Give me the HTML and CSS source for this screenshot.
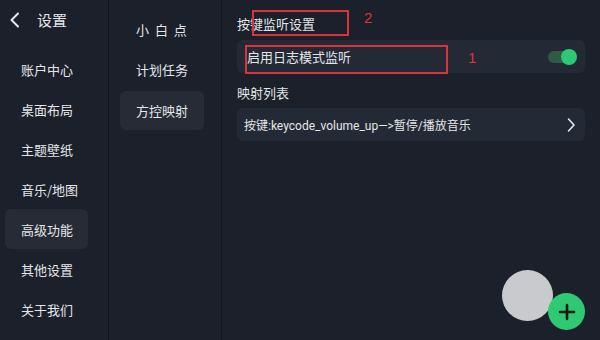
FILE: index.html
```html
<!DOCTYPE html>
<html lang="zh">
<head>
<meta charset="utf-8">
<link rel="stylesheet" href="styles.css">
</head>
<body>
<div class="app">
  <nav class="side1">
    <div class="head">
      <svg class="back" width="12" height="16" viewBox="0 0 12 16"><path d="M9 1.5 L2.5 8 L9 14.5" fill="none" stroke="#e6e7ea" stroke-width="2" stroke-linecap="round" stroke-linejoin="round"/></svg>
      <span class="title">设置</span>
    </div>
    <div class="item">账户中心</div>
    <div class="item">桌面布局</div>
    <div class="item">主题壁纸</div>
    <div class="item">音乐/地图</div>
    <div class="item active">高级功能</div>
    <div class="item">其他设置</div>
    <div class="item">关于我们</div>
  </nav>
  <nav class="side2">
    <div class="item spaced">小 白 点</div>
    <div class="item">计划任务</div>
    <div class="item active">方控映射</div>
  </nav>
  <main class="content">
    <div class="label first">按键监听设置</div>
    <div class="card">
      <span>启用日志模式监听</span>
      <span class="toggle"><span class="knob"></span></span>
    </div>
    <div class="label">映射列表</div>
    <div class="card small">
      <span>按键:keycode_volume_up—&gt;暂停/播放音乐</span>
      <svg width="10" height="16" viewBox="0 0 10 16"><path d="M2.5 2 L8 8 L2.5 14" fill="none" stroke="#e6e7ea" stroke-width="1.6" stroke-linecap="round" stroke-linejoin="round"/></svg>
    </div>
    <div class="mark mark2"></div>
    <div class="num num2">2</div>
    <div class="mark mark1"></div>
    <div class="num num1">1</div>
    <div class="fab-gray"></div>
    <div class="fab-green">
      <svg width="18" height="18" viewBox="0 0 18 18"><path d="M9 2 V16 M2 9 H16" stroke="#0f1a14" stroke-width="2.6" stroke-linecap="round"/></svg>
    </div>
  </main>
</div>
</body>
</html>
```
FILE: styles.css
```css
* { box-sizing: border-box; }
html, body {
  margin: 0;
  padding: 0;
  background: #1b202b;
  font-family: "Noto Sans CJK SC", "Noto Sans", sans-serif;
  color: #e4e5e8;
}
.app {
  display: flex;
  width: 600px;
  height: 340px;
  overflow: hidden;
}
.side1 {
  width: 109px;
  border-right: 1px solid #11151c;
  display: flex;
  flex-direction: column;
}
.head {
  height: 49px;
  display: flex;
  align-items: center;
  padding-left: 9px;
  padding-bottom: 9px;
}
.back { margin-right: 16px; }
.title { font-size: 15px; line-height: 20px; }
.item {
  height: 40px;
  display: flex;
  align-items: center;
  font-size: 13px;
  border-radius: 6px;
}
.side1 .item {
  margin-left: 5px;
  width: 83px;
  padding-left: 16px;
}
.active { background: #262b36; }
.side2 {
  width: 113px;
  border-right: 1px solid #11151c;
  display: flex;
  flex-direction: column;
  padding-top: 9px;
}
.side2 .item {
  margin-left: 11px;
  width: 84px;
  padding-left: 16px;
}
.side2 .item.active { height: 39px; margin-top: 2px; }
.spaced { word-spacing: 3px; }
.content {
  flex: 1;
  position: relative;
  padding: 0 15px 0 15px;
}
.label {
  font-size: 13px;
  height: 36px;
  display: flex;
  align-items: center;
  padding-top: 2px;
}
.label.first { height: 40px; padding-top: 6px; }
.card {
  height: 33px;
  background: #242a35;
  border-radius: 6px;
  display: flex;
  align-items: center;
  justify-content: space-between;
  padding: 0 9px 0 10px;
  font-size: 13px;
}
.card.small {
  font-family: Roboto, "Noto Sans CJK SC", sans-serif;
  font-size: 12px;
  padding-left: 7px;
  margin-top: -1px;
}
.toggle {
  position: relative;
  width: 28px;
  height: 12px;
  border-radius: 6px;
  background: #2f5b46;
}
.knob {
  position: absolute;
  right: -1px;
  top: -2px;
  width: 16px;
  height: 16px;
  border-radius: 50%;
  background: #30c774;
}
.mark {
  position: absolute;
  border: 2px solid #d8343a;
}
.mark2 { left: 30px; top: 10px; width: 97px; height: 26px; }
.mark1 { left: 23px; top: 45px; width: 203px; height: 29px; }
.num {
  position: absolute;
  color: #d8343a;
  font-family: "Liberation Sans", sans-serif;
  font-size: 15px;
  line-height: 16px;
}
.num2 { left: 142px; top: 10px; }
.num1 { left: 246px; top: 50px; }
.fab-gray {
  position: absolute;
  left: 280px;
  top: 270px;
  width: 51px;
  height: 51px;
  border-radius: 50%;
  background: #c9cace;
}
.fab-green {
  position: absolute;
  left: 326px;
  top: 293px;
  width: 37px;
  height: 37px;
  border-radius: 50%;
  background: #2fc873;
  display: flex;
  align-items: center;
  justify-content: center;
}
```
